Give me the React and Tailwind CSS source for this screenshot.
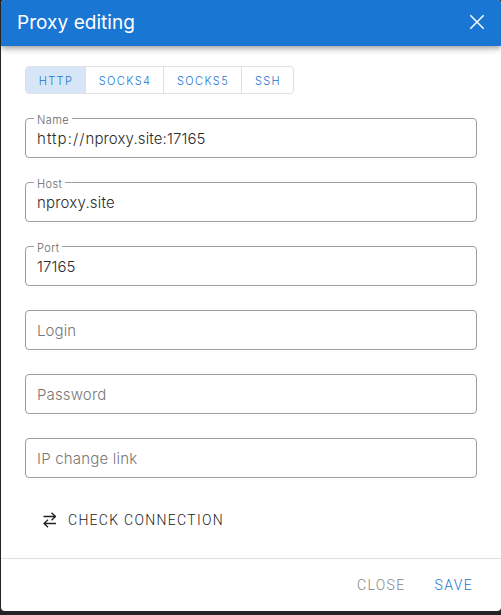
import React, { useState } from "react";

const tabs = [
  { name: "HTTP", style: "w-[60px]" },
  { name: "SOCKS4", style: "w-[78px]" },
  { name: "SOCKS5", style: "w-[78px]" },
  { name: "SSH", style: "w-[51px]" },
];

function Field({ label, prefix, value, tracking }) {
  if (!value) {
    return (
      <div className="flex h-10 items-center rounded border border-[#9e9e9e] px-[11px] pt-0.5">
        <span className={`text-[15px] leading-5 text-[#777] ${tracking}`}>{label}</span>
      </div>
    );
  }

  // the legend cuts the gap in the top border
  return (
    <fieldset className="-mt-1.5 h-[46px] min-w-0 rounded border border-[#9e9e9e] pl-2">
      <legend className="h-3 px-[3px] text-[11px] leading-[17px] tracking-[0.4px] text-[#666]">
        {label}
      </legend>
      <div className={`pl-[3px] pt-[5px] text-[15px] leading-5 text-[#2b2b2b] ${tracking}`}>
        {prefix && <span className="tracking-[1.05px]">{prefix}</span>}
        {value}
      </div>
    </fieldset>
  );
}

export default function App() {
  const [active, setActive] = useState("HTTP");

  return (
    <div className="h-[615px] w-[501px] overflow-hidden bg-[#252326] pl-px font-['Inter',sans-serif] font-light">
      <div className="flex h-[611px] flex-col overflow-hidden rounded bg-white">
        <header className="flex h-[46px] shrink-0 items-center justify-between bg-[#1976d2] pl-4 pr-4 text-white shadow-[0_2px_4px_-1px_rgba(0,0,0,0.2),0_4px_5px_rgba(0,0,0,0.14),0_1px_10px_rgba(0,0,0,0.12)]">
          <h1 className="text-[19px] font-normal tracking-[0.05px]">Proxy editing</h1>
          <svg className="-mt-0.5 size-4" viewBox="0 0 16 16" fill="none" stroke="currentColor" strokeWidth="1.5">
            <path d="M1.3 1.3l13.4 13.4M14.7 1.3L1.3 14.7" />
          </svg>
        </header>

        <main className="flex grow flex-col px-6 pt-5">
          <div className="flex h-7 w-[269px] overflow-hidden rounded border border-[#e0e0e0]">
            {tabs.map((tab) => (
              <button
                key={tab.name}
                onClick={() => setActive(tab.name)}
                className={`shrink-0 border-r border-[#e0e0e0] pl-px pt-[3px] text-[11px] tracking-[1.4px] text-[#1976d2] last:border-r-0 ${tab.style} ${
                  active === tab.name ? "bg-[#d6e6f6]" : ""
                }`}
              >
                {tab.name}
              </button>
            ))}
          </div>

          <div className="mt-6 flex flex-col gap-6">
            <Field label="Name" prefix="http://" value="nproxy.site:17165" tracking="tracking-[0.12px]" />
            <Field label="Host" value="nproxy.site" tracking="tracking-[0.2px]" />
            <Field label="Port" value="17165" tracking="tracking-[0.1px]" />
            <Field label="Login" tracking="tracking-[0.1px]" />
            <Field label="Password" tracking="tracking-[0.15px]" />
            <Field label="IP change link" tracking="tracking-[0.2px]" />
          </div>

          <button className="mt-6 flex h-9 items-center pl-[18px] font-['Roboto',sans-serif] text-sm tracking-[1.3px] text-[#222]">
            <svg className="mr-3 h-4 w-[13px]" viewBox="0 0 13 16" fill="none" stroke="currentColor" strokeWidth="1.3">
              <path d="M0.5 4.5h12M8.5 0.7l4 3.8-4 3.8M13 11.5H1M5 7.7l-4 3.8 4 3.8" />
            </svg>
            <span>CHECK CONNECTION</span>
          </button>
        </main>

        <footer className="flex h-[53px] shrink-0 items-center justify-end gap-[29px] border-t border-[#e0e0e0] pr-7 font-['Roboto',sans-serif] text-sm tracking-[1.35px]">
          <button className="text-[#858585]">CLOSE</button>
          <button className="text-[#1976d2]">SAVE</button>
        </footer>
      </div>
    </div>
  );
}
